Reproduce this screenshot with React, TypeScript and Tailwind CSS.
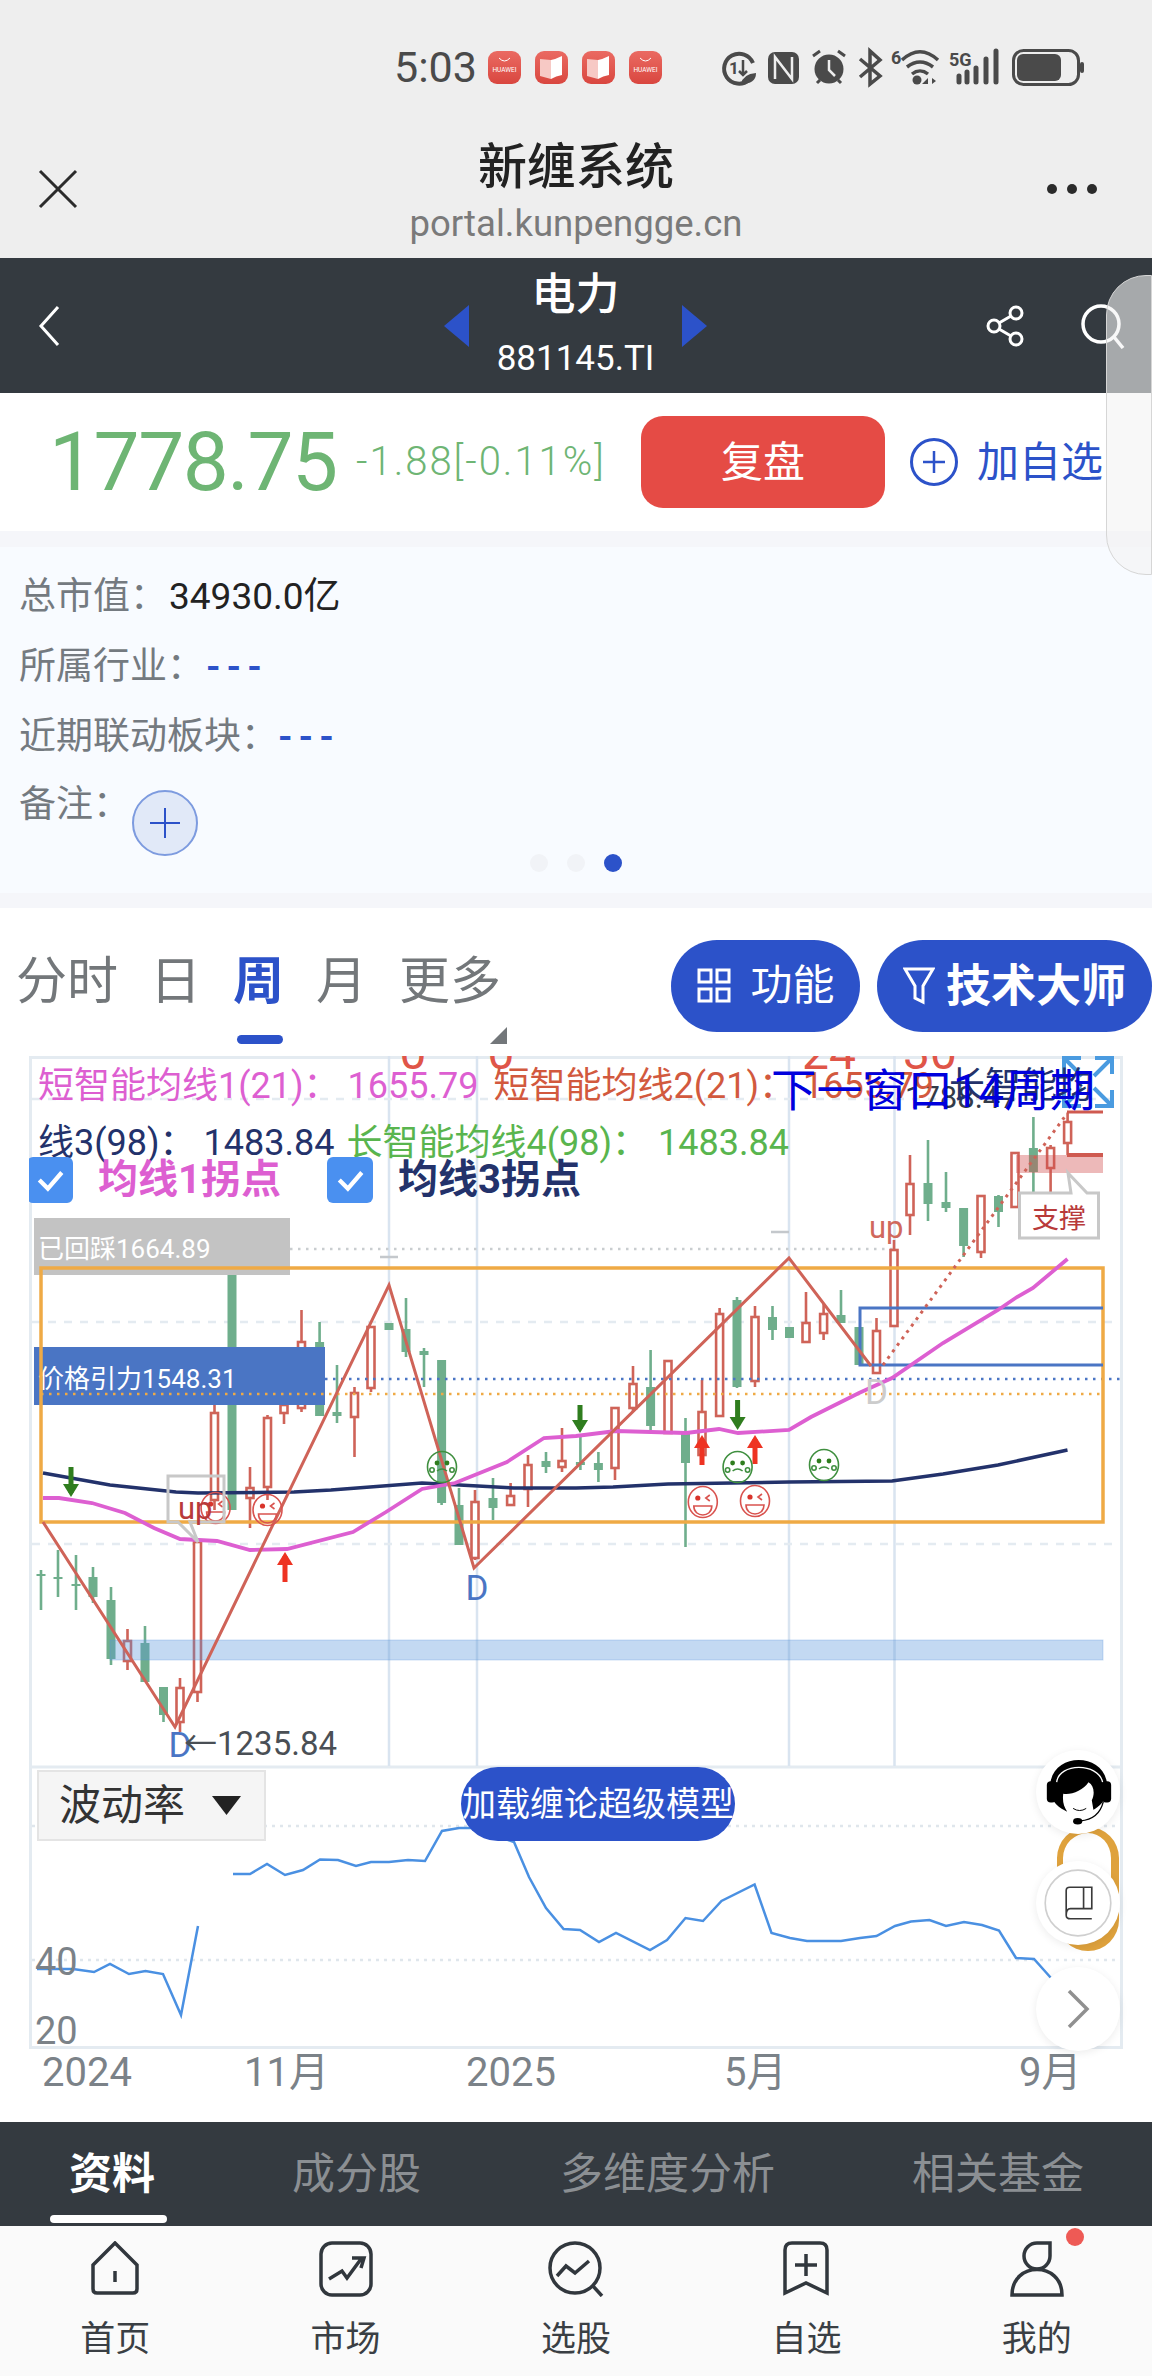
// candle: x, wick top, wick bottom, body top, body bottom, up (hollow red) or down (green)
type Candle = [number, number, number, number, number, "r" | "g"];

const candles: Candle[] = [
  [41, 1570, 1610, 1574, 1576, "g"],
  [58, 1550, 1597, 1577, 1579, "g"],
  [76, 1555, 1610, 1584, 1586, "g"],
  [93, 1567, 1603, 1577, 1597, "g"],
  [111, 1587, 1665, 1600, 1659, "g"],
  [127.5, 1629, 1670, 1641, 1661, "r"],
  [145, 1626, 1682, 1643, 1682, "g"],
  [163.5, 1687, 1722, 1687, 1715, "g"],
  [180, 1678, 1732, 1688, 1722, "r"],
  [197.5, 1542, 1702, 1542, 1692, "r"],
  [214.5, 1405, 1510, 1413, 1500, "r"],
  [232, 1275, 1510, 1275, 1510, "g"],
  [250, 1467, 1528, 1488, 1498, "r"],
  [267.5, 1415, 1500, 1418, 1487, "r"],
  [284, 1395, 1424, 1405, 1413, "r"],
  [301.5, 1310, 1412, 1342, 1408, "r"],
  [319.6, 1322, 1416, 1342, 1416, "g"],
  [337, 1365, 1423, 1412, 1416, "g"],
  [354.5, 1387, 1457, 1393, 1417, "r"],
  [371, 1327, 1392, 1327, 1388, "r"],
  [389, 1323, 1330, 1323, 1330, "g"],
  [406, 1298, 1357, 1329, 1352, "g"],
  [424, 1348, 1387, 1351, 1355, "g"],
  [441.6, 1360, 1505, 1360, 1503, "g"],
  [459, 1488, 1545, 1505, 1545, "g"],
  [475, 1490, 1560, 1502, 1558, "r"],
  [493, 1478, 1520, 1498, 1508, "g"],
  [510.6, 1483, 1505, 1496, 1505, "r"],
  [528, 1455, 1507, 1465, 1489, "r"],
  [546, 1452, 1473, 1461, 1467, "g"],
  [562, 1428, 1472, 1461, 1467, "r"],
  [580.4, 1437, 1470, 1462, 1465, "g"],
  [598.4, 1452, 1482, 1463, 1470, "g"],
  [615, 1408, 1480, 1408, 1468, "r"],
  [633, 1366, 1412, 1384, 1408, "r"],
  [650.6, 1350, 1430, 1387, 1426, "g"],
  [668, 1361, 1434, 1361, 1433, "r"],
  [685.5, 1418, 1547, 1433, 1463, "g"],
  [702, 1380, 1465, 1412, 1455, "r"],
  [719.6, 1308, 1416, 1314, 1416, "r"],
  [737, 1297, 1388, 1300, 1387, "g"],
  [755, 1306, 1387, 1317, 1381, "r"],
  [772.5, 1306, 1340, 1317, 1330, "g"],
  [789.5, 1327, 1338, 1327, 1338, "g"],
  [806, 1292, 1342, 1323, 1342, "r"],
  [823.6, 1303, 1340, 1314, 1333, "r"],
  [841, 1290, 1323, 1315, 1323, "g"],
  [859, 1327, 1365, 1327, 1365, "g"],
  [876.5, 1318, 1373, 1331, 1373, "r"],
  [894, 1240, 1326, 1250, 1326, "r"],
  [910, 1155, 1235, 1184, 1215, "r"],
  [928, 1140, 1221, 1183, 1204, "g"],
  [946, 1172, 1212, 1202, 1208, "g"],
  [963.6, 1208, 1257, 1208, 1246, "g"],
  [981, 1195, 1258, 1196, 1252, "r"],
  [998.5, 1195, 1227, 1196, 1212, "g"],
  [1015, 1153, 1207, 1153, 1207, "r"],
  [1033.4, 1117, 1210, 1148, 1172, "g"],
  [1050.6, 1145, 1202, 1148, 1168, "r"],
  [1067.6, 1113, 1155, 1122, 1143, "r"],
];

const maShort =
  "43,1498 59,1498 92,1503 125,1513 154,1528 180,1539 217,1541 250,1550 287,1549 353,1532 386,1512 422,1489 455,1483 507,1462 544,1438 576,1436 616,1431 686,1433 719,1429 738,1433 789,1430 811,1417 859,1393 892,1378 943,1343 998,1310 1017,1297 1033,1288 1067.5,1259";
const maLong =
  "43,1473 110,1485 176,1492 198,1493 294,1492 331,1490 422,1483 478,1486 514,1488 576,1488 613,1487 668,1484 789,1482 892,1481 943,1474 998,1465 1067.5,1450";
const zigzag = "43,1522 175,1727 389,1285 474,1568 789,1258 871,1366";
const volatilityA =
  "37,1969 73,1969 94,1972 110,1964 129,1974 145.5,1971 163,1974 181,2015 198,1926";
const volatilityB =
  "233,1874 250,1874 267,1864 285,1875 303,1870 320,1859.5 338,1860 356,1866 371,1862 389,1862 408,1860 425,1861 442,1831 459,1828 474,1828 514,1842 529,1877 546,1908 563.6,1929 580,1930 599,1942 616,1933 650,1950 667,1940 685.5,1918 703,1921 721.5,1901 754.6,1884.5 771.5,1933 790,1938 807,1941 841,1941 860,1938 876.5,1936 895,1926 911,1921.5 929.5,1920 946,1926 964,1922 982,1925 999,1930.6 1016,1958 1034,1959 1051,1978";

const RED = "#cf6358";
const GREEN = "#6fae8c";

function Happy({ x, y }: { x: number; y: number }) {
  return (
    <g transform={`translate(${x} ${y})`} fill="none" stroke="#d9534f" strokeWidth="1.6">
      <ellipse rx="14.5" ry="15.5" />
      <circle cx="-5" cy="-4" r="2.6" fill="#d9342b" stroke="none" />
      <path d="M7-7 3-4 7-1" />
      <path d="M-9 4H9C9 16-9 16-9 4Z" />
    </g>
  );
}

function Sad({ x, y }: { x: number; y: number }) {
  return (
    <g transform={`translate(${x} ${y})`} fill="none" stroke="#3f8f3f" strokeWidth="1.6">
      <ellipse rx="14.5" ry="15.5" />
      <circle cx="-5" cy="-4" r="2.4" fill="#2f7d1e" stroke="none" />
      <circle cx="5" cy="-4" r="2.4" fill="#2f7d1e" stroke="none" />
      <path d="M-5 4Q0 0 5 4" />
      <circle cx="-10" cy="3" r="2.2" />
      <circle cx="10" cy="3" r="2.2" />
    </g>
  );
}

function Arrow({ x, y1, y2, color }: { x: number; y1: number; y2: number; color: string }) {
  const dir = y2 > y1 ? 1 : -1;
  return (
    <g fill={color}>
      <rect x={x - 2.5} y={Math.min(y1, y2)} width="5" height={Math.abs(y2 - y1) - 4} transform={dir < 0 ? "translate(0 4)" : undefined} />
      <path d={`M${x - 8} ${y2 - dir * 13}H${x + 8}L${x} ${y2}Z`} />
    </g>
  );
}

function ChartDrawing() {
  return (
    <svg viewBox="29 1056 1094 993" width="1094" height="993" className="block">
      {/* frame */}
      <rect x="30.5" y="1057.5" width="1091" height="990" fill="none" stroke="#e4ebf1" strokeWidth="3" />
      <path d="M30 1767H1122" stroke="#e4ebf1" strokeWidth="3" />

      {/* grid */}
      <g stroke="#d9e4f0" strokeWidth="2.5">
        <path d="M389 1056V1766M477 1056V1766M789 1056V1766M894.500 1056V1766" />
      </g>
      <g stroke="#e4ebf1" strokeWidth="2.5" strokeDasharray="8 8">
        <path d="M32 1099H1115M32 1322H1115M32 1544H1115" />
      </g>
      <g stroke="#dfe6ec" strokeWidth="2.5" strokeDasharray="3 5">
        <path d="M32 1826H1118M32 1960H1118" />
      </g>

      {/* clipped tag numbers along the top edge */}
      <g fill="#e05548" fontSize="48">
        <text x="413" y="1069" textAnchor="middle">0</text>
        <text x="501" y="1069" textAnchor="middle">0</text>
        <text x="829" y="1069" textAnchor="middle">24</text>
        <text x="930" y="1069" textAnchor="middle">30</text>
      </g>
      <text x="905" y="1108" fontSize="31" fill="#333a48">1788.47</text>

      {/* price labels */}
      <rect x="34" y="1218" width="256" height="57" fill="#c3c3c3" />
      <text x="38" y="1258" fontSize="26" fill="#fff">已回踩1664.89</text>
      <path d="M290 1249H894" stroke="#c9cdd0" strokeWidth="2.5" strokeDasharray="2.500 5.500" />

      {/* candles */}
      {candles.map(([x, wt, wb, bt, bb, kind]) =>
        kind === "r" ? (
          <g key={x} stroke={RED} strokeWidth="2.6" fill="#fff">
            <path d={`M${x} ${wt}V${wb}`} />
            <rect x={x - 3.5} y={bt} width="7" height={bb - bt} />
          </g>
        ) : (
          <g key={x} fill={GREEN} stroke={GREEN}>
            <path d={`M${x} ${wt}V${wb}`} strokeWidth="2.6" />
            <rect x={x - 4.5} y={bt} width="9" height={bb - bt} stroke="none" />
          </g>
        ),
      )}

      <rect x="34" y="1347" width="291" height="58" fill="#4a75c4" />
      <text x="38" y="1388" fontSize="26" fill="#fff">价格引力1548.31</text>
      <path d="M325 1379H1123" stroke="#4a75c4" strokeWidth="2.500" strokeDasharray="2.500 5.500" />

      {/* boxes and zones */}
      <rect x="41" y="1268" width="1062" height="254" fill="none" stroke="#efaa45" strokeWidth="3.500" />
      <path d="M41 1394H1103" stroke="#efaa45" strokeWidth="2.500" strokeDasharray="2.500 5.500" />
      <rect x="110" y="1640" width="993" height="20" fill="#5a96dc" fillOpacity="0.36" stroke="#5a96dc" strokeOpacity="0.3" />
      <path d="M1103 1308H860V1365H1103" fill="none" stroke="#4a75c4" strokeWidth="3" />
      <rect x="1016" y="1155" width="87" height="18" fill="#d25050" fillOpacity="0.4" />
      <path d="M1067 1155H1103" stroke="#cf5a50" strokeWidth="4" />
      <path d="M1067 1112H1103" stroke="#cf5a50" strokeWidth="3" />
      <path d="M380 1257H398M771 1232H789" stroke="#c4c8cc" strokeWidth="2.500" />

      {/* averages */}
      <polyline points={maLong} fill="none" stroke="#23326b" strokeWidth="3.500" />
      <polyline points={maShort} fill="none" stroke="#dd5fd1" strokeWidth="3.800" />
      <polyline points={zigzag} fill="none" stroke="#cf6358" strokeWidth="3" />
      <path d="M883 1365 1067.500 1113" fill="none" stroke="#cf6358" strokeWidth="3" strokeDasharray="3 5" />

      {/* signals */}
      <Arrow x={71} y1={1467} y2={1497} color="#2f7d1e" />
      <Arrow x={580} y1={1405} y2={1433} color="#2f7d1e" />
      <Arrow x={737.6} y1={1400} y2={1430} color="#2f7d1e" />
      <Arrow x={285} y1={1582} y2={1552} color="#ee3322" />
      <Arrow x={702} y1={1465} y2={1435} color="#ee3322" />
      <Arrow x={755} y1={1464} y2={1435} color="#ee3322" />
      <Sad x={442} y={1467} />
      <Sad x={737.6} y={1467} />
      <Sad x={824} y={1465} />
      <Happy x={215.6} y={1508} />
      <Happy x={267.5} y={1510} />
      <Happy x={702.8} y={1502} />
      <Happy x={755} y={1501} />

      {/* callouts */}
      <path d="M168 1476H224V1522H190L198 1542 178 1522H168Z" fill="none" stroke="#c8c8c8" strokeWidth="3" />
      <text x="178" y="1519" fontSize="31" fill="#b83a3a">up</text>
      <path d="M1019.500 1193H1071L1068 1173 1087 1193H1098.500V1238H1019.500Z" fill="#fff" stroke="#c8c8c8" strokeWidth="3" />
      <text x="1059" y="1228" fontSize="27" fill="#b83a3a" textAnchor="middle">支撑</text>
      <text x="869" y="1238" fontSize="31" fill="#d0685c">up</text>
      <text x="477" y="1600" fontSize="35" fill="#4a75c4" textAnchor="middle">D</text>
      <text x="876.500" y="1404" fontSize="35" fill="#cccccc" textAnchor="middle">D</text>
      <text x="180" y="1757" fontSize="35" fill="#4a75c4" textAnchor="middle">D</text>
      <text x="184" y="1755" fontSize="33" fill="#4a4f55">←1235.84</text>

      {/* expand */}
      <g fill="none" stroke="#4a9be0" strokeWidth="4">
        <path d="M1064 1074V1058H1081M1064 1058 1082 1076" />
        <path d="M1112 1074V1058H1095M1112 1058 1094 1076" />
        <path d="M1064 1090V1106H1081M1064 1106 1082 1088" />
        <path d="M1112 1090V1106H1095M1112 1106 1094 1088" />
      </g>

      {/* lower panel */}
      <polyline points={volatilityA} fill="none" stroke="#4a90e2" strokeWidth="2.500" />
      <polyline points={volatilityB} fill="none" stroke="#4a90e2" strokeWidth="2.500" />
      <g fontSize="38" fill="#7b8288">
        <text x="35" y="1975">40</text>
        <text x="35" y="2044">20</text>
      </g>
    </svg>
  );
}

function Check({ className }: { className: string }) {
  return (
    <div className={`absolute top-[101px] flex h-[46px] w-[46px] items-center justify-center rounded-[6px] bg-[#4a90f0] ${className}`}>
      <svg viewBox="0 0 28 28" width="30" height="30" fill="none" stroke="#fff" strokeWidth="4">
        <path d="M4 14 12 22 25 7" />
      </svg>
    </div>
  );
}

function Chart() {
  return (
    <div className="relative mx-[29px] h-[993px] w-[1094px] overflow-hidden">
      <ChartDrawing />

      {/* legend wraps mid-name, same as the page */}
      <div className="absolute left-[9px] top-[2px] w-[1072px] break-all text-[36px] leading-[57px]">
        <span className="mr-[15px] text-[#dd5fd1]">短智能均线1(21)：<span className="ml-[8px]">1655.79</span></span>
        <span className="mr-[15px] text-[#d2593e]">短智能均线2(21)：<span className="ml-[8px]">1655.79</span></span>
        <span className="mr-[12px] text-[#23326b]">长智能均线3(98)：<span className="ml-[8px]">1483.84</span></span>
        <span className="text-[#59b54e]">长智能均线4(98)：<span className="ml-[10px]">1483.84</span></span>
      </div>
      <div className="absolute left-[742px] top-[8px] whitespace-nowrap text-[45.500px] leading-[56px] text-[#0000dd]">下一窗口14周期</div>

      <Check className="left-[-2px]" />
      <span className="absolute left-[69px] top-[99px] text-[40px] font-bold leading-[50px] text-[#dd5fd1]">均线1拐点</span>
      <Check className="left-[298px]" />
      <span className="absolute left-[369px] top-[99px] text-[40px] font-bold leading-[50px] text-[#23326b]">均线3拐点</span>

      <div className="absolute left-[8px] top-[714px] flex h-[71px] w-[229px] items-center border-2 border-[#e4e4e4] bg-[#f5f5f5] pl-[20px]">
        <span className="text-[42px] leading-none text-[#333333]">波动率</span>
        <span className="ml-[27px] h-[19px] w-[29px] bg-[#222222] [clip-path:polygon(0_0,100%_0,50%_100%)]" />
      </div>
      <div className="absolute left-[432px] top-[711px] flex h-[74px] w-[274px] items-center justify-center whitespace-nowrap rounded-[37px] bg-[#2c52c9] text-[34px] leading-none text-white">
        加载缠论超级模型
      </div>
    </div>
  );
}

function HuaweiBadge() {
  return (
    <div className="h-[33px] w-[33px] rounded-[9px] bg-linear-to-b from-[#ea6a62] to-[#d9463f]">
      <svg viewBox="0 0 33 33" width="33" height="33">
        <path d="M11 7Q16.500 13 22 7" fill="none" stroke="#fff" strokeWidth="1" />
        <text x="16.500" y="21" fontSize="6.500" fill="#fff" textAnchor="middle">HUAWEI</text>
      </svg>
    </div>
  );
}

function BookBadge() {
  return (
    <div className="h-[33px] w-[33px] rounded-[9px] bg-linear-to-b from-[#ea6a62] to-[#d9463f]">
      <svg viewBox="0 0 33 33" width="33" height="33">
        <path d="M5 8 16 9V28L5 25Z" fill="#f7c9c5" />
        <path d="M16 9Q21 8 27 5V24Q21 25 16 28Z" fill="#fff" />
      </svg>
    </div>
  );
}

function StatusIcons() {
  const ink = "#4a4a4a";
  return (
    <svg viewBox="700 35 400 65" width="400" height="65" fill="none" stroke={ink}>
      {/* data saver */}
      <path d="M749 80A15 15 0 1 1 753 63" strokeWidth="4" />
      <text x="729" y="74" fontSize="17" fontWeight="700" fill={ink} stroke="none">1</text>
      <path d="M743 60V75M739 71 743 75 747 71" strokeWidth="2.500" />
      <path d="M741 84Q743 74 756 73 756 84 741 84Z" fill={ink} stroke="none" />
      {/* nfc */}
      <rect x="768" y="52" width="31" height="32" rx="7" fill={ink} stroke="none" />
      <path d="M775 79V57L792 79V57" stroke="#eeeeee" strokeWidth="2.500" />
      {/* alarm */}
      <circle cx="829" cy="69" r="14.500" fill={ink} stroke="none" />
      <path d="M829 60V70L835 76" stroke="#eeeeee" strokeWidth="2.500" />
      <path d="M813 56 820 51M845 56 838 51M817 83 820 80M841 83 838 80" strokeWidth="3" />
      {/* bluetooth */}
      <path d="M860 59 880 76 870 84V51L880 60 860 77" strokeWidth="3.500" />
      {/* wifi */}
      <text x="891" y="64" fontSize="18" fontWeight="700" fill={ink} stroke="none">6</text>
      <path d="M902 60C914 49 926 49 938 60M907 67C916 60 924 60 933 67M912 74C917 70 923 70 928 74" strokeWidth="3.500" />
      <circle cx="917" cy="80" r="4.500" fill={ink} stroke="none" />
      <path d="M928 78V84H922ZM932 78 936 81 932 84Z" fill={ink} stroke="none" />
      {/* signal */}
      <text x="949" y="66" fontSize="18" fontWeight="700" fill={ink} stroke="none">5G</text>
      <path d="M959 76V82M967 72V82M976 68V82M986 59V82M996 51V82" strokeWidth="5" strokeLinecap="round" />
      {/* battery */}
      <rect x="1013.500" y="50.500" width="65" height="34" rx="10" strokeWidth="3" />
      <rect x="1017" y="54" width="44" height="27" rx="6" fill={ink} stroke="none" />
      <rect x="1080" y="62" width="4" height="11" rx="2" fill={ink} stroke="none" />
    </svg>
  );
}

function Header() {
  return (
    <div className="relative h-[258px] bg-[#eeeeee]">
      <div className="flex h-[134px] items-center pl-[394px]">
        <span className="w-[94px] text-[43px] leading-none text-[#4a4a4a]">5:03</span>
        <div className="flex gap-[14px]">
          <HuaweiBadge />
          <BookBadge />
          <BookBadge />
          <HuaweiBadge />
        </div>
        <div className="ml-[38px]">
          <StatusIcons />
        </div>
      </div>
      <div className="flex items-start justify-between pl-[38px] pr-[55px] pt-[35px]">
        <svg viewBox="0 0 40 40" width="40" height="40" fill="none" stroke="#2b2b2b" strokeWidth="3">
          <path d="M2 2 38 38M38 2 2 38" />
        </svg>
        <div className="flex gap-[10px] pt-[15px]">
          <i className="h-[10px] w-[10px] rounded-full bg-[#2b2b2b]" />
          <i className="h-[10px] w-[10px] rounded-full bg-[#2b2b2b]" />
          <i className="h-[10px] w-[10px] rounded-full bg-[#2b2b2b]" />
        </div>
      </div>
      <div className="absolute inset-x-0 top-[139px] flex flex-col items-center">
        <span className="text-[49px] font-medium leading-[58px] text-[#222222]">新缠系统</span>
        <span className="mt-[7px] text-[36.500px] leading-[40px] text-[#7a7a7a]">portal.kunpengge.cn</span>
      </div>
    </div>
  );
}

function StockBar() {
  return (
    <div className="flex h-[135px] items-center bg-[#343a40] pl-[38px] text-white">
      <svg viewBox="0 0 22 40" width="22" height="40" fill="none" stroke="#fff" strokeWidth="3">
        <path d="M20 1 3 20 20 39" />
      </svg>
      <div className="ml-[384px] h-0 w-0 border-y-[21px] border-r-[25px] border-y-transparent border-r-[#2c52c9]" />
      <div className="flex w-[213px] flex-col items-center">
        <span className="mt-[-4px] text-[44px] font-medium leading-[52px]">电力</span>
        <span className="mt-[19px] text-[35px] leading-[38px]">881145.TI</span>
      </div>
      <div className="h-0 w-0 border-y-[21px] border-l-[25px] border-y-transparent border-l-[#2c52c9]" />
      <svg viewBox="0 0 38 42" width="38" height="42" className="ml-[279px]" fill="none" stroke="#fff" strokeWidth="3">
        <circle cx="8" cy="21" r="6" />
        <circle cx="30" cy="8" r="6" />
        <circle cx="30" cy="34" r="6" />
        <path d="M13 18 25 11M13 24 25 31" />
      </svg>
      <svg viewBox="0 0 44 46" width="44" height="46" className="ml-[57px]" fill="none" stroke="#fff" strokeWidth="3.500">
        <circle cx="20" cy="21" r="18" />
        <path d="M33 34 42 45" />
      </svg>
    </div>
  );
}

function PriceRow() {
  return (
    <div className="flex h-[138px] items-center bg-white pl-[49px]">
      <span className="w-[307px] text-[82px] leading-none tracking-[-1.500px] text-[#6eb574]">1778.75</span>
      <span className="w-[285px] text-[40px] font-light leading-none tracking-[2px] text-[#6eb574]">-1.88[-0.11%]</span>
      <div className="flex h-[92px] w-[244px] items-center justify-center rounded-[22px] bg-[#e54b45] text-[42px] text-white">复盘</div>
      <div className="ml-[25px] flex h-[48px] w-[48px] items-center justify-center rounded-full border-[3px] border-[#2c52c9] text-[#2c52c9]">
        <svg viewBox="0 0 24 24" width="24" height="24" stroke="currentColor" strokeWidth="2.500">
          <path d="M12 1V23M1 12H23" />
        </svg>
      </div>
      <span className="ml-[19px] whitespace-nowrap text-[42px] text-[#2c52c9]">加自选</span>
    </div>
  );
}

function InfoPanel() {
  return (
    <div className="h-[377px] bg-[#f5f6fa] pb-[15px] pt-[16px]">
      <div className="relative h-[346px] bg-[#f8fbff] pl-[19px] pt-[28px] text-[37px] leading-[44px] text-[#747a80]">
        <div className="h-[70px]">
          总市值：<span className="ml-[2px] text-[#222222]">34930.0亿</span>
        </div>
        <div className="h-[70px]">
          所属行业：<span className="ml-[2px] font-bold tracking-[6px] text-[#2c52c9]">---</span>
        </div>
        <div className="h-[68px]">
          近期联动板块：<span className="font-bold tracking-[6px] text-[#2c52c9]">---</span>
        </div>
        <div className="flex">
          备注：
          <div className="ml-[2px] mt-[7px] flex h-[66px] w-[66px] items-center justify-center rounded-full border-2 border-[#7d9bdf] bg-[#e1e9f8]">
            <svg viewBox="0 0 30 30" width="30" height="30" stroke="#2c52c9" strokeWidth="2">
              <path d="M15 0V30M0 15H30" />
            </svg>
          </div>
        </div>
        <div className="absolute left-[530px] top-[307px] flex gap-[19px]">
          <i className="h-[18px] w-[18px] rounded-full bg-[#f1f3f7]" />
          <i className="h-[18px] w-[18px] rounded-full bg-[#f1f3f7]" />
          <i className="h-[18px] w-[18px] rounded-full bg-[#2c52c9]" />
        </div>
      </div>
    </div>
  );
}

function PeriodTabs() {
  return (
    <div className="relative flex h-[148px] items-start justify-between bg-white">
      <div className="flex gap-[32px] pl-[16px] pt-[46px] text-[51px] leading-[56px] text-[#73777a]">
        <span>分时</span>
        <span>日</span>
        <span className="font-bold text-[#2c52c9]">周</span>
        <span>月</span>
        <span>更多</span>
      </div>
      <div className="absolute left-[237px] top-[127px] h-[9px] w-[46px] rounded-[5px] bg-[#2c52c9]" />
      <div className="absolute left-[490px] top-[119px] h-[17px] w-[17px] bg-[#73777a] [clip-path:polygon(100%_0,100%_100%,0_100%)]" />
      <div className="flex gap-[17px] pt-[32px] text-white">
        <div className="flex h-[92px] w-[189px] items-center justify-center gap-[18px] rounded-full bg-[#2c52c9]">
          <svg viewBox="0 0 36 36" width="36" height="36" fill="none" stroke="#fff" strokeWidth="3">
            <rect x="3" y="2" width="12" height="12" />
            <rect x="21" y="2" width="12" height="12" />
            <rect x="3" y="21" width="12" height="12" />
            <rect x="21" y="21" width="12" height="12" />
          </svg>
          <span className="text-[42px] leading-none">功能</span>
        </div>
        <div className="flex h-[92px] w-[275px] items-center justify-center gap-[11px] rounded-full bg-[#2c52c9]">
          <svg viewBox="0 0 32 40" width="32" height="40" fill="none" stroke="#fff" strokeWidth="3">
            <path d="M2 3H30L20 20V36L12 32V20Z" />
          </svg>
          <span className="text-[45px] font-bold leading-none">技术大师</span>
        </div>
      </div>
    </div>
  );
}

function AxisLabels() {
  return (
    <div className="flex h-[73px] items-start bg-white pl-[42px] pt-[2px] text-[40px] leading-[44px] text-[#7b8288]">
      <span className="w-[202px]">2024</span>
      <span className="w-[222px]">11月</span>
      <span className="w-[258px]">2025</span>
      <span className="w-[295px]">5月</span>
      <span>9月</span>
    </div>
  );
}

function DetailTabs() {
  return (
    <div className="relative flex h-[104px] items-start bg-[#343a40] pl-[69px] pt-[27px] text-[43px] leading-[50px] text-[#8b8f93]">
      <span className="w-[223px] font-bold text-white">资料</span>
      <span className="w-[268px]">成分股</span>
      <span className="w-[352px]">多维度分析</span>
      <span>相关基金</span>
      <div className="absolute left-[50px] top-[93px] h-[8px] w-[117px] rounded-[4px] bg-white" />
    </div>
  );
}

const navStroke = "#31373d";

const navItems = [
  {
    label: "首页",
    icon: (
      <svg viewBox="0 0 50 56" width="50" height="56" fill="none" stroke={navStroke} strokeWidth="3.500">
        <path d="M25 2 47 24V48Q47 52 43 52H7Q3 52 3 48V24Z" />
        <path d="M25 30V41" />
      </svg>
    ),
  },
  {
    label: "市场",
    icon: (
      <svg viewBox="0 0 54 56" width="54" height="56" fill="none" stroke={navStroke} strokeWidth="3.500">
        <rect x="2" y="2" width="50" height="52" rx="11" />
        <path d="M10 38 23 30 28 37 42 18M33 17H45L42 27" />
      </svg>
    ),
  },
  {
    label: "选股",
    icon: (
      <svg viewBox="0 0 56 56" width="56" height="56" fill="none" stroke={navStroke} strokeWidth="3.500">
        <circle cx="27" cy="27" r="25" />
        <path d="M45 45 54 55" />
        <path d="M9 35 18 25 27 32 41 20" />
      </svg>
    ),
  },
  {
    label: "自选",
    icon: (
      <svg viewBox="0 0 46 56" width="46" height="56" fill="none" stroke={navStroke} strokeWidth="3.500">
        <path d="M2 9Q2 2 9 2H37Q44 2 44 9V52L23 42 2 52Z" />
        <path d="M23 13V35M12 24H34" />
      </svg>
    ),
  },
  {
    label: "我的",
    icon: (
      <svg viewBox="0 0 56 56" width="56" height="56" fill="none" stroke={navStroke} strokeWidth="3.500">
        <path d="M41 2H28A13 13 0 1 0 41 15Z" />
        <path d="M3 54C3 20 53 20 53 54Z" />
      </svg>
    ),
  },
];

function BottomNav() {
  return (
    <div className="relative flex h-[150px] bg-[#fafafa] pt-[15px]">
      {navItems.map((item) => (
        <div key={item.label} className="flex w-[230.500px] flex-col items-center">
          {item.icon}
          <span className="mt-[22px] text-[35px] leading-[42px] text-[#3a3f44]">{item.label}</span>
        </div>
      ))}
      <div className="absolute left-[1066px] top-[2px] h-[18px] w-[18px] rounded-full bg-[#ee5a55]" />
    </div>
  );
}

function FloatingButtons() {
  return (
    <>
      <div className="absolute left-[1057px] top-[1827px] h-[124px] w-[62px] rounded-full border-[6px] border-b-[10px] border-r-[8px] border-[#dfa23d]" />
      <div className="absolute left-[1036px] top-[1750px] h-[84px] w-[84px] rounded-full bg-white shadow-[0_2px_8px_rgba(0,0,0,0.08)]">
        <svg viewBox="45 27 256 256" width="84" height="84">
          <path d="M88 140C88 30 262 30 262 140 262 190 225 205 220 210L215 180C225 160 222 135 205 125 190 150 150 165 128 160 125 185 130 200 140 215 120 205 88 190 88 140Z" fill="#000" />
          <path d="M108 125C115 65 235 65 248 125" fill="none" stroke="#fff" strokeWidth="4" />
          <rect x="78" y="122" width="28" height="65" rx="12" />
          <rect x="246" y="122" width="28" height="65" rx="12" />
          <path d="M158 205Q178 218 198 205" fill="none" stroke="#000" strokeWidth="3" />
          <path d="M250 185C240 225 215 240 180 243" fill="none" stroke="#000" strokeWidth="4" />
          <ellipse cx="172" cy="244" rx="14" ry="10" />
        </svg>
      </div>
      <div className="absolute left-[1036px] top-[1861px] h-[84px] w-[84px] rounded-full bg-white shadow-[0_2px_8px_rgba(0,0,0,0.08)]">
        <svg viewBox="45 360 256 256" width="84" height="84" fill="none" stroke="#3a3a3a" strokeWidth="5">
          <circle cx="173" cy="488" r="100" stroke="#cfcfcf" />
          <path d="M137 525V450Q137 440 148 440H215V505H150Q137 505 137 525 137 536 150 536H215M190 442V505" />
        </svg>
      </div>
      <div className="absolute left-[1036px] top-[1967px] flex h-[84px] w-[84px] items-center justify-center rounded-full bg-white shadow-[0_2px_8px_rgba(0,0,0,0.08)]">
        <svg viewBox="0 0 24 40" width="24" height="40" fill="none" stroke="#909090" strokeWidth="3.500">
          <path d="M3 2 21 20 3 38" />
        </svg>
      </div>
      {/* translucent side handle */}
      <div className="absolute left-[1106px] top-[275px] h-[300px] w-[46px] rounded-bl-[40px] rounded-tl-[40px] border border-[#d6d6d6] bg-[#f4f4f4]/60" />
    </>
  );
}

export default function App() {
  return (
    <div className="relative h-[2376px] w-[1152px] overflow-hidden bg-white font-['Roboto','Noto_Sans_CJK_SC',sans-serif]">
      <Header />
      <StockBar />
      <PriceRow />
      <InfoPanel />
      <PeriodTabs />
      <Chart />
      <AxisLabels />
      <DetailTabs />
      <BottomNav />
      <FloatingButtons />
    </div>
  );
}
